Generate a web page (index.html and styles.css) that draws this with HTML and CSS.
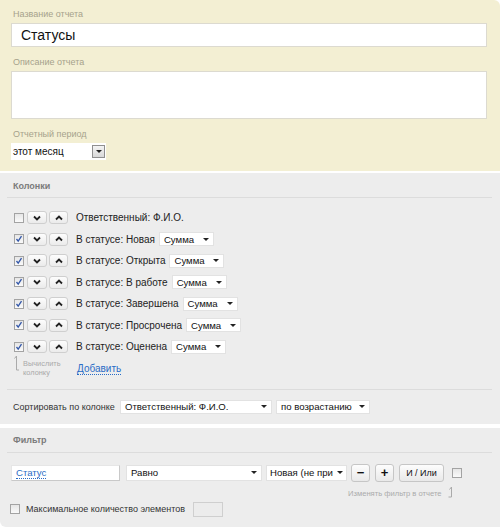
FILE: index.html
```html
<!DOCTYPE html>
<html lang="ru">
<head>
<meta charset="utf-8">
<title>Отчет</title>
<link rel="stylesheet" href="styles.css">
</head>
<body>
<div class="top">
  <div class="lbl">Название отчета</div>
  <div class="inp">Статусы</div>
  <div class="lbl">Описание отчета</div>
  <div class="ta"></div>
  <div class="lbl">Отчетный период</div>
  <div class="period"><span class="ptext">этот месяц</span><span class="pbtn"><i class="tri"></i></span></div>
</div>

<div class="sec cols">
  <div class="sec-h">Колонки</div>
  <div class="rows">
    <div class="row"><span class="cb"></span><span class="mv"><svg width="8" height="6" viewBox="0 0 8 6"><path d="M1 1.5 L4 4.5 L7 1.5" fill="none" stroke="#222" stroke-width="1.8"/></svg></span><span class="mv up"><svg width="8" height="6" viewBox="0 0 8 6"><path d="M1 4.5 L4 1.5 L7 4.5" fill="none" stroke="#222" stroke-width="1.8"/></svg></span><span class="name">Ответственный: Ф.И.О.</span></div>
    <div class="row"><span class="cb on"><svg width="8" height="8" viewBox="0 0 8 8"><path d="M1.5 4 L3.2 6.2 L6.5 1.2" fill="none" stroke="#3357a8" stroke-width="1.3"/></svg></span><span class="mv"><svg width="8" height="6" viewBox="0 0 8 6"><path d="M1 1.5 L4 4.5 L7 1.5" fill="none" stroke="#222" stroke-width="1.8"/></svg></span><span class="mv up"><svg width="8" height="6" viewBox="0 0 8 6"><path d="M1 4.5 L4 1.5 L7 4.5" fill="none" stroke="#222" stroke-width="1.8"/></svg></span><span class="name">В статусе: Новая</span><span class="sel sum">Сумма<i class="tri"></i></span></div>
    <div class="row"><span class="cb on"><svg width="8" height="8" viewBox="0 0 8 8"><path d="M1.5 4 L3.2 6.2 L6.5 1.2" fill="none" stroke="#3357a8" stroke-width="1.3"/></svg></span><span class="mv"><svg width="8" height="6" viewBox="0 0 8 6"><path d="M1 1.5 L4 4.5 L7 1.5" fill="none" stroke="#222" stroke-width="1.8"/></svg></span><span class="mv up"><svg width="8" height="6" viewBox="0 0 8 6"><path d="M1 4.5 L4 1.5 L7 4.5" fill="none" stroke="#222" stroke-width="1.8"/></svg></span><span class="name">В статусе: Открыта</span><span class="sel sum">Сумма<i class="tri"></i></span></div>
    <div class="row"><span class="cb on"><svg width="8" height="8" viewBox="0 0 8 8"><path d="M1.5 4 L3.2 6.2 L6.5 1.2" fill="none" stroke="#3357a8" stroke-width="1.3"/></svg></span><span class="mv"><svg width="8" height="6" viewBox="0 0 8 6"><path d="M1 1.5 L4 4.5 L7 1.5" fill="none" stroke="#222" stroke-width="1.8"/></svg></span><span class="mv up"><svg width="8" height="6" viewBox="0 0 8 6"><path d="M1 4.5 L4 1.5 L7 4.5" fill="none" stroke="#222" stroke-width="1.8"/></svg></span><span class="name">В статусе: В работе</span><span class="sel sum">Сумма<i class="tri"></i></span></div>
    <div class="row"><span class="cb on"><svg width="8" height="8" viewBox="0 0 8 8"><path d="M1.5 4 L3.2 6.2 L6.5 1.2" fill="none" stroke="#3357a8" stroke-width="1.3"/></svg></span><span class="mv"><svg width="8" height="6" viewBox="0 0 8 6"><path d="M1 1.5 L4 4.5 L7 1.5" fill="none" stroke="#222" stroke-width="1.8"/></svg></span><span class="mv up"><svg width="8" height="6" viewBox="0 0 8 6"><path d="M1 4.5 L4 1.5 L7 4.5" fill="none" stroke="#222" stroke-width="1.8"/></svg></span><span class="name">В статусе: Завершена</span><span class="sel sum">Сумма<i class="tri"></i></span></div>
    <div class="row"><span class="cb on"><svg width="8" height="8" viewBox="0 0 8 8"><path d="M1.5 4 L3.2 6.2 L6.5 1.2" fill="none" stroke="#3357a8" stroke-width="1.3"/></svg></span><span class="mv"><svg width="8" height="6" viewBox="0 0 8 6"><path d="M1 1.5 L4 4.5 L7 1.5" fill="none" stroke="#222" stroke-width="1.8"/></svg></span><span class="mv up"><svg width="8" height="6" viewBox="0 0 8 6"><path d="M1 4.5 L4 1.5 L7 4.5" fill="none" stroke="#222" stroke-width="1.8"/></svg></span><span class="name">В статусе: Просрочена</span><span class="sel sum">Сумма<i class="tri"></i></span></div>
    <div class="row"><span class="cb on"><svg width="8" height="8" viewBox="0 0 8 8"><path d="M1.5 4 L3.2 6.2 L6.5 1.2" fill="none" stroke="#3357a8" stroke-width="1.3"/></svg></span><span class="mv"><svg width="8" height="6" viewBox="0 0 8 6"><path d="M1 1.5 L4 4.5 L7 1.5" fill="none" stroke="#222" stroke-width="1.8"/></svg></span><span class="mv up"><svg width="8" height="6" viewBox="0 0 8 6"><path d="M1 4.5 L4 1.5 L7 4.5" fill="none" stroke="#222" stroke-width="1.8"/></svg></span><span class="name">В статусе: Оценена</span><span class="sel sum">Сумма<i class="tri"></i></span></div>
  </div>
  <div class="addrow">
    <div class="calc">
      <svg class="hook" width="6" height="16" viewBox="0 0 6 16"><path d="M2.5 1 V15 H5 M0.5 3.5 L2.5 1" fill="none" stroke="#aaa" stroke-width="1"/></svg>
      <div class="calc-t">Вычислить<br>колонку</div>
    </div>
    <span class="link add">Добавить</span>
  </div>
  <div class="sep"></div>
  <div class="sort">
    <span class="sort-l">Сортировать по колонке</span>
    <span class="sel s1">Ответственный: Ф.И.О.<i class="tri"></i></span>
    <span class="sel s2">по возрастанию<i class="tri"></i></span>
  </div>
</div>

<div class="sec filt">
  <div class="sec-h">Фильтр</div>
  <div class="frow">
    <span class="field"><span class="link">Статус</span></span>
    <span class="sel f1">Равно<i class="tri"></i></span>
    <span class="sel f2">Новая (не при<i class="tri"></i></span>
    <span class="btn sq">−</span>
    <span class="btn sq">+</span>
    <span class="btn andor">И / Или</span>
    <span class="cb fcb"></span>
  </div>
  <div class="fhint">Изменять фильтр в отчете<svg width="6" height="12" viewBox="0 0 6 12"><path d="M3.5 1 V11 H0.5 M1.5 3.5 L3.5 1" fill="none" stroke="#aaa" stroke-width="1"/></svg></div>
  <div class="maxrow">
    <span class="cb mcb"></span>
    <span class="maxl">Максимальное количество элементов</span>
    <span class="num"></span>
  </div>
</div>
</body>
</html>
```
FILE: styles.css
```css
* { box-sizing: border-box; }
body {
  margin: 0;
  background: #fff;
  font-family: "Liberation Sans", Arial, sans-serif;
  color: #222;
}
.top {
  background: #f3efd3;
  padding: 8px 13px 11px 11px;
  border-radius: 0 6px 0 0;
}
.lbl {
  font-size: 9px;
  line-height: 12px;
  color: #a6a28c;
  padding-left: 2px;
}
.inp {
  margin: 3px 0 9px;
  height: 24px;
  background: #fff;
  border: 1px solid #dcdad0;
  font-size: 14px;
  line-height: 22px;
  padding-left: 9px;
  color: #111;
}
.ta {
  margin: 3px 0 9px;
  height: 48px;
  background: #fff;
  border: 1px solid #dcdad0;
}
.period {
  margin-top: 3px;
  width: 95px;
  height: 17px;
  background: #fff;
  display: flex;
  align-items: center;
  justify-content: space-between;
  padding: 0 1px 0 2px;
  font-size: 10px;
  color: #111;
}
.pbtn {
  width: 13px;
  height: 13px;
  background: linear-gradient(#f4f4f4, #d8d8d8);
  border: 1px solid #8f8f8f;
  display: flex;
  align-items: center;
  justify-content: center;
}
.tri {
  display: inline-block;
  width: 0;
  height: 0;
  border-left: 3px solid transparent;
  border-right: 3px solid transparent;
  border-top: 3px solid #222;
}
.sec {
  background: #ededed;
}
.cols {
  margin-top: 2px;
  padding-bottom: 10px;
}
.sec-h {
  margin: 0 8px 0 7px;
  padding: 7px 0 5px 6px;
  font-size: 9px;
  line-height: 12px;
  font-weight: bold;
  color: #7b7b7b;
  border-bottom: 1px solid #dcdcdc;
}
.rows {
  padding: 9px 0 0 13px;
}
.row {
  height: 21.5px;
  display: flex;
  align-items: center;
  font-size: 10px;
}
.cb {
  width: 10px;
  height: 10px;
  margin-left: 1px;
  border: 1px solid #a3a3a3;
  background: linear-gradient(#e6e6e6, #fafafa);
  display: inline-flex;
  align-items: center;
  justify-content: center;
  flex: none;
}
.mv {
  width: 20px;
  height: 13px;
  margin-left: 3px;
  border: 1px solid #cfcfcf;
  border-radius: 3px;
  background: linear-gradient(#fdfdfd, #ebebeb);
  display: inline-flex;
  align-items: center;
  justify-content: center;
}
.mv.up {
  width: 19px;
  margin-left: 2px;
}
.name {
  margin-left: 8px;
  color: #222;
}
.sel {
  display: inline-flex;
  align-items: center;
  justify-content: space-between;
  background: #fff;
  border: 1px solid #e2e2e2;
  height: 14px;
  padding: 0 4px 0 4px;
  color: #111;
  font-size: 9.6px;
}
.sum {
  width: 55px;
  margin-left: 4px;
  height: 14px;
}
.addrow {
  display: flex;
  align-items: flex-start;
  padding: 0 0 0 13px;
  height: 21px;
}
.calc {
  width: 64px;
  display: flex;
  align-items: flex-start;
}
.hook {
  margin: -3px 0 0 1px;
}
.calc-t {
  margin: 1px 0 0 3px;
  font-size: 7.4px;
  line-height: 9px;
  color: #a9a9a9;
}
.link {
  color: #2a6cc6;
  border-bottom: 1px dotted #2a6cc6;
}
.add {
  font-size: 10px;
  line-height: 11px;
  margin-top: 5px;
}
.sep {
  margin: 10px 8px 0 7px;
  border-top: 1px solid #dcdcdc;
}
.sort {
  display: flex;
  align-items: center;
  padding: 10px 0 0 13px;
  font-size: 9px;
}
.sort-l {
  color: #333;
  width: 107px;
}
.s1 {
  width: 152px;
  font-size: 9.6px;
}
.s2 {
  width: 94px;
  margin-left: 4px;
}
.filt {
  margin-top: 4px;
  height: 99px;
  border-radius: 0 0 0 6px;
}
.filt .sec-h {
  padding-top: 6px;
  padding-bottom: 6px;
}
.frow {
  display: flex;
  align-items: center;
  padding: 11px 0 0 11px;
  font-size: 9.6px;
}
.field {
  width: 109px;
  height: 16px;
  background: #fff;
  border: 1px solid #e6e6e6;
  border-right-color: #c9c9c9;
  border-bottom-color: #c9c9c9;
  padding: 1px 0 0 4px;
  line-height: 11px;
}
.f1 {
  width: 136px;
  margin-left: 6px;
  height: 16px;
}
.f2 {
  width: 81px;
  margin-left: 4px;
  height: 16px;
  padding: 0 3px;
}
.btn {
  height: 18px;
  border: 1px solid #c6c6c6;
  border-radius: 3px;
  background: linear-gradient(#fdfdfd, #e9e9e9);
  display: inline-flex;
  align-items: center;
  justify-content: center;
  color: #111;
}
.sq {
  width: 19px;
  margin-left: 4px;
  font-size: 13px;
  font-weight: bold;
}
.sq + .sq {
  margin-left: 5px;
}
.andor {
  width: 45px;
  margin-left: 5px;
  font-size: 9px;
}
.fcb {
  margin-left: 8px;
}
.fhint {
  display: flex;
  align-items: flex-end;
  padding: 4px 0 0 348px;
  font-size: 7.6px;
  line-height: 11px;
  color: #ababab;
}
.fhint svg {
  margin: 0 0 1px 6px;
}
.maxrow {
  display: flex;
  align-items: center;
  padding: 3px 0 0 10px;
  font-size: 9px;
}
.mcb {
  margin-left: 0;
}
.maxl {
  margin-left: 6px;
  margin-right: 8px;
  color: #333;
  white-space: nowrap;
}
.num {
  width: 30px;
  height: 15px;
  background: #ececec;
  border: 1px solid #cfcfcf;
}
```
